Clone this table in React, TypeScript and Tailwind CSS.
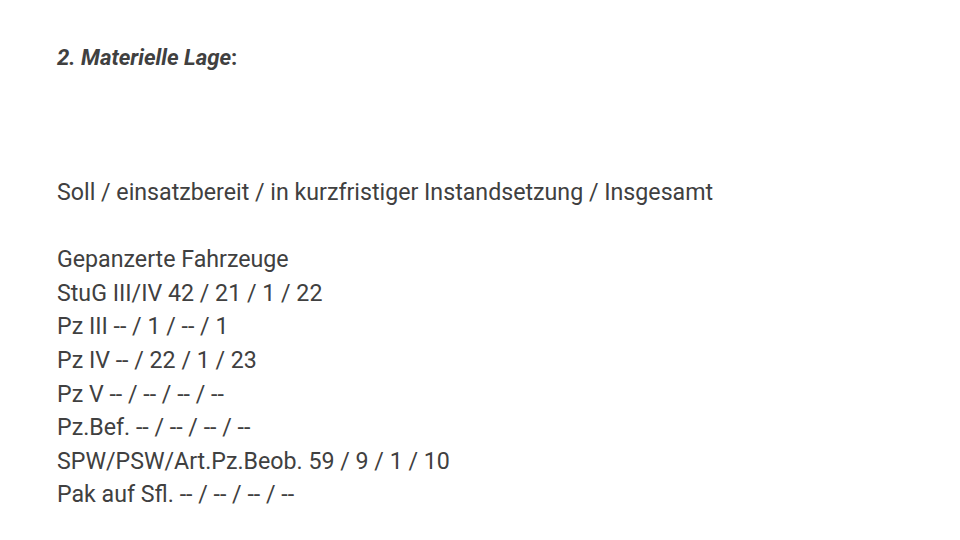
const rows = [
  "Gepanzerte Fahrzeuge",
  "StuG III/IV 42 / 21 / 1 / 22",
  "Pz III -- / 1 / -- / 1",
  "Pz IV -- / 22 / 1 / 23",
  "Pz V -- / -- / -- / --",
  "Pz.Bef. -- / -- / -- / --",
  "SPW/PSW/Art.Pz.Beob. 59 / 9 / 1 / 10",
  "Pak auf Sfl. -- / -- / -- / --",
];

export default function App() {
  return (
    <div className="h-[540px] w-[960px] bg-white px-[57px] pt-[40px] text-[#404040] font-['Roboto',sans-serif]">
      <h1 className="text-[22.2px] leading-[34px] font-bold">
        <span className="italic">2. Materielle Lage</span>:
      </h1>
      <p className="mt-[102px] text-[23.2px] leading-[33.6px]">
        Soll / einsatzbereit / in kurzfristiger Instandsetzung / Insgesamt
      </p>
      <div className="mt-[33.6px] text-[23.2px] leading-[33.6px]">
        {rows.map((r) => (
          <div key={r}>{r}</div>
        ))}
      </div>
    </div>
  );
}
